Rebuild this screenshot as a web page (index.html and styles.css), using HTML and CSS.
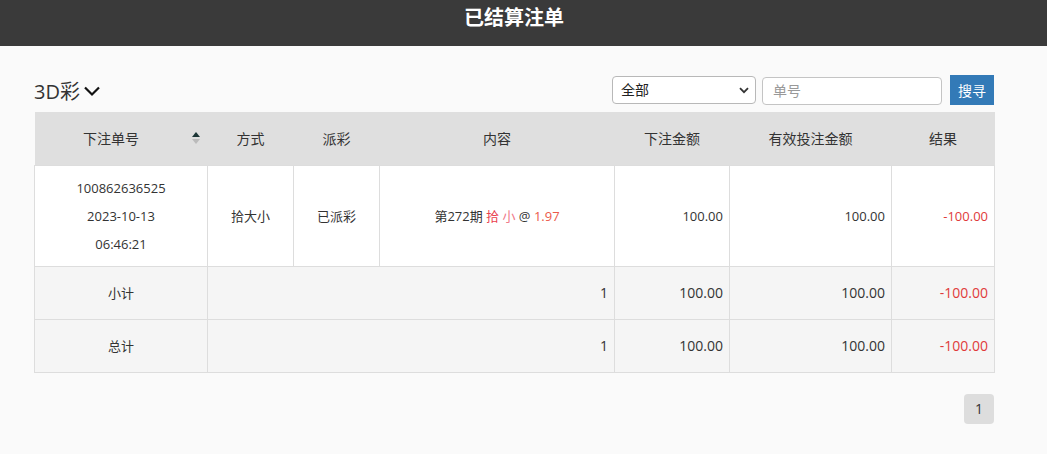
FILE: index.html
```html
<!DOCTYPE html>
<html lang="zh">
<head>
<meta charset="utf-8">
<title>已结算注单</title>
<link rel="stylesheet" href="styles.css">
</head>
<body>
<header class="topbar"><h1 class="title">已结算注单</h1></header>
<main class="content">
  <div class="toolbar">
    <div class="game">3D彩
      <svg class="chev" width="18" height="12" viewBox="0 0 18 12"><path d="M2 2.5 L9 9.5 L16 2.5" fill="none" stroke="#111" stroke-width="2.2"/></svg>
    </div>
    <div class="filters">
      <div class="select">全部
        <svg class="sel-arrow" width="10" height="7" viewBox="0 0 10 7"><path d="M1 1.2 L5 5.2 L9 1.2" fill="none" stroke="#333" stroke-width="1.8"/></svg>
      </div>
      <input class="search" type="text" placeholder="单号">
      <button class="btn">搜寻</button>
    </div>
  </div>
  <table class="grid">
    <colgroup>
      <col style="width:173px"><col style="width:86px"><col style="width:86px"><col style="width:235px"><col style="width:115px"><col style="width:162px"><col style="width:103px">
    </colgroup>
    <thead>
      <tr>
        <th class="sortable">下注单号<span class="sort"><i class="up"></i><i class="down"></i></span></th>
        <th>方式</th><th>派彩</th><th>内容</th><th>下注金额</th><th>有效投注金额</th><th>结果</th>
      </tr>
    </thead>
    <tbody>
      <tr class="row">
        <td class="c id"><div>100862636525</div><div>2023-10-13</div><div>06:46:21</div></td>
        <td class="c">拾大小</td>
        <td class="c">已派彩</td>
        <td class="c">第272期 <span class="red">拾</span> <span class="pink">小</span> @ <span class="odds">1.97</span></td>
        <td class="r">100.00</td>
        <td class="r">100.00</td>
        <td class="r neg">-100.00</td>
      </tr>
      <tr class="sum">
        <td class="c lbl">小计</td>
        <td class="r" colspan="3">1</td>
        <td class="r">100.00</td>
        <td class="r">100.00</td>
        <td class="r neg">-100.00</td>
      </tr>
      <tr class="sum">
        <td class="c lbl">总计</td>
        <td class="r" colspan="3">1</td>
        <td class="r">100.00</td>
        <td class="r">100.00</td>
        <td class="r neg">-100.00</td>
      </tr>
    </tbody>
  </table>
  <div class="pager"><span class="page">1</span></div>
</main>
</body>
</html>
```
FILE: styles.css
```css
* { box-sizing: border-box; }
body {
  margin: 0;
  background: #fafafa;
  font-family: "Open Sans", "Noto Sans CJK SC", sans-serif;
  color: #333;
}
.topbar {
  height: 46px;
  background: #3a3a3a;
  display: flex;
  justify-content: center;
  padding-right: 19px;
}
.title {
  margin: 0;
  padding-top: 4px;
  font-size: 20px;
  line-height: 28px;
  font-weight: 700;
  color: #fff;
}
.content {
  width: 960px;
  margin-left: 34px;
  padding-top: 29px;
}
.toolbar {
  display: flex;
  justify-content: space-between;
  align-items: center;
  height: 30px;
  margin-bottom: 7px;
}
.game {
  display: flex;
  align-items: center;
  gap: 3px;
  font-size: 20px;
  color: #333;
  padding-top: 1px;
}
.chev { margin-top: 1px; }
.filters { display: flex; align-items: center; }
.select {
  width: 144px;
  height: 28px;
  border: 1px solid #b8b8b8;
  border-radius: 4px;
  background: #fff;
  font-size: 14px;
  line-height: 26px;
  padding-left: 8px;
  position: relative;
  color: #222;
}
.sel-arrow { position: absolute; right: 6px; top: 10px; }
.search {
  width: 180px;
  height: 28px;
  margin-left: 6px;
  margin-top: 1px;
  border: 1px solid #c4c4c4;
  border-radius: 4px;
  padding: 0 10px;
  font-family: inherit;
  font-size: 14px;
  background: #fff;
}
.search::placeholder { color: #999; }
.btn {
  margin-left: 8px;
  width: 44px;
  height: 30px;
  border: none;
  background: #337ab7;
  color: #fff;
  font-family: inherit;
  font-size: 14px;
  padding: 0;
}
.grid {
  width: 960px;
  table-layout: fixed;
  border-collapse: collapse;
  font-size: 13px;
}
.grid th {
  background: #dfdfdf;
  font-weight: 400;
  font-size: 14px;
  height: 53px;
  padding: 0 8px;
  text-align: center;
  color: #333;
}
.grid th.sortable { position: relative; padding-right: 28px; }
.sort { position: absolute; right: 8px; top: 20px; width: 8px; height: 14px; }
.sort i { position: absolute; left: 0; width: 0; height: 0; border-left: 4px solid transparent; border-right: 4px solid transparent; }
.sort .up { top: 0; border-bottom: 5px solid #1c3636; }
.sort .down { top: 7px; border-top: 5px solid #bbb; }
.grid td {
  border: 1px solid #ddd;
  padding: 0 6px;
  vertical-align: middle;
}
.row td { background: #fff; height: 101px; }
.sum td { background: #f5f5f5; height: 53px; font-size: 14px; }
.sum td.lbl { font-size: 13px; }
.c { text-align: center; }
.r { text-align: right; }
.id div { line-height: 28px; }
.red { color: #ea3e4e; }
.pink { color: #f07a8a; }
.odds { color: #ec5a4a; }
.neg { color: #e03a3a; }
.pager {
  display: flex;
  justify-content: flex-end;
  margin-top: 21px;
}
.page {
  width: 30px;
  height: 30px;
  background: #ddd;
  border-radius: 4px;
  text-align: center;
  line-height: 30px;
  font-size: 14px;
  color: #333;
}
```
